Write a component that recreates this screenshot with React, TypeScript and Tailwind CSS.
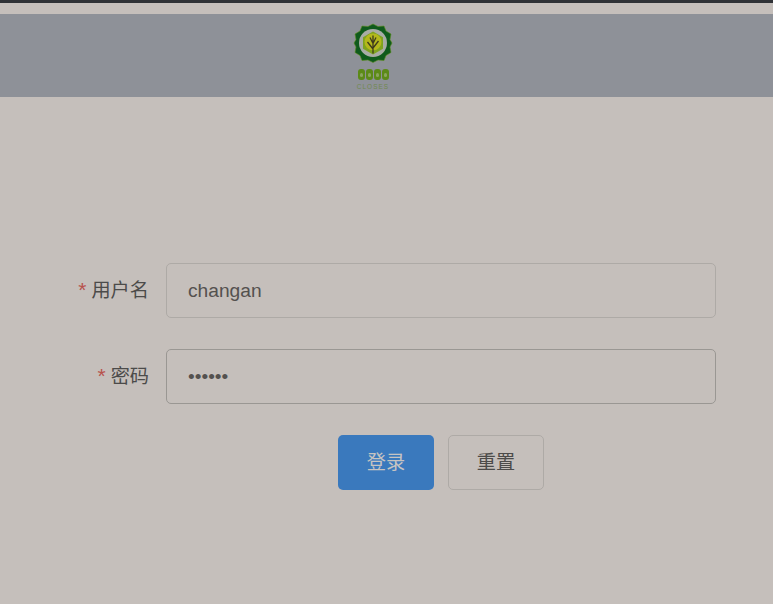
const FONT = "font-['Liberation_Sans','Noto_Sans_CJK_SC',sans-serif]";

function Logo() {
  return (
    <div className="flex flex-col items-center w-[40px]">
      <svg width="40" height="42" viewBox="0 0 40 42" className="mt-[8px]">
        <path
          d="M20 2l5 2.500 6-.5 2 5 5 3-1 5.500 2 3.500-2 4 1 5.500-5 3-2 5-6-.5-5 2.500-5-2.500-6 .5-2-5-5-3 1-5.500-2-4 2-3.500-1-5.500 5-3 2-5 6 .5z"
          fill="#0f5a1c"
          stroke="#5d8f1c"
          strokeWidth="0.6"
        />
        <circle cx="20" cy="21" r="14" fill="#a8aca6" />
        <polygon points="20,9.500 30,15.200 30,26.800 20,32.500 10,26.800 10,15.200" fill="#7fa31f" />
        <circle cx="20" cy="20" r="8.500" fill="#b4b81c" />
        <path
          d="M20 31.500V13.500M20 27l-5.500-7M20 26l5.500-7M20 21.500l-3-6M20 21.500l3-6"
          stroke="#3e3a1c"
          strokeWidth="1.300"
          fill="none"
        />
      </svg>
      <div className="flex gap-[1px] mt-[5px] h-[11px]">
        {[0, 1, 2, 3].map((i) => (
          <span key={i} className="flex items-center justify-center w-[7px] h-[11px] rounded-[3px] bg-[#5c8a18]">
            <span className="block w-[3px] h-[4px] rounded-full bg-[#8aa55e]" />
          </span>
        ))}
      </div>
      <div className="text-[6.500px] leading-[6px] tracking-[1px] text-[#71894f] mt-[4px] whitespace-nowrap">CLOSES</div>
    </div>
  );
}

function Field({ label, value, border }: { label: string; value: string; border: string }) {
  return (
    <div className="flex items-center">
      <label className="w-[149px] shrink-0 text-right text-[19.2px] leading-[28px] text-[#4c4b4a]">
        <span className="text-[#b8524c] text-[21px] leading-none mr-[5px]">*</span>
        {label}
      </label>
      <input
        readOnly
        value={value}
        type={label === "密码" ? "password" : "text"}
        className={`ml-[17px] w-[550px] h-[55px] px-[21px] rounded-[5px] border bg-transparent text-[19.2px] text-[#54514f] outline-none ${border}`}
      />
    </div>
  );
}

export default function App() {
  return (
    <div className={`min-h-[604px] bg-[#c5bfbb] ${FONT}`}>
      <div className="h-[3px] bg-[#303236]" />
      <div className="h-[11px]" />
      <header className="h-[83px] bg-[#8e9198] flex justify-center pr-[27px]">
        <Logo />
      </header>
      <form className="pt-[166px] flex flex-col gap-[31px]">
        <Field label="用户名" value="changan" border="border-[#aeaaa6]" />
        <Field label="密码" value="123456" border="border-[#9a9793]" />
        <div className="flex gap-[14px] pl-[338px]">
          <button type="button" className="w-[96px] h-[55px] pt-[2px] rounded-[5px] bg-[#3a79bd] text-[19.2px] text-[#c6c4c2]">
            登录
          </button>
          <button type="button" className="w-[96px] h-[55px] pt-[2px] rounded-[5px] border border-[#aeaaa6] text-[19.2px] text-[#4c4b4a]">
            重置
          </button>
        </div>
      </form>
    </div>
  );
}
